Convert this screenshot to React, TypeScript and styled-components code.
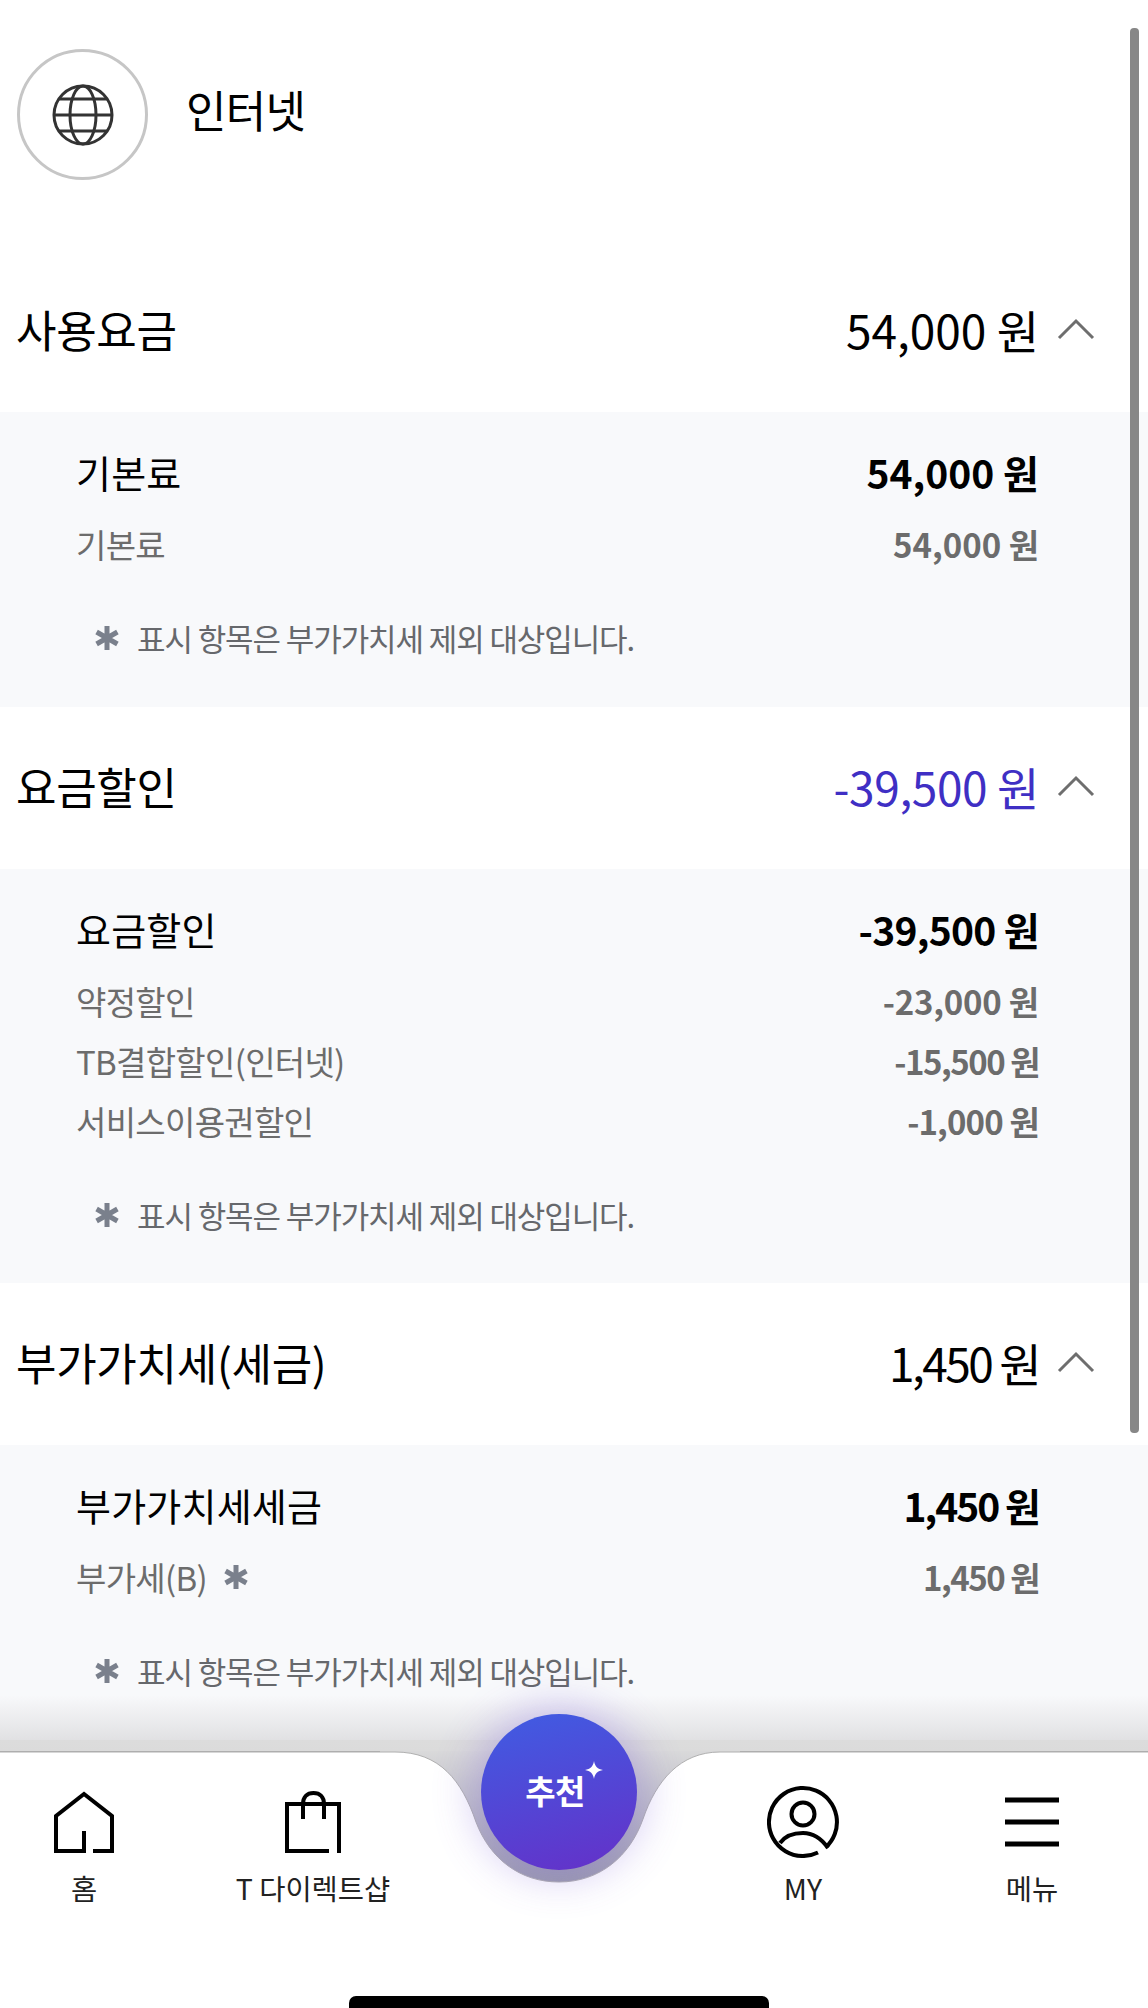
import React from "react";
import styled, { createGlobalStyle } from "styled-components";

const GlobalStyle = createGlobalStyle`
  html, body {
    margin: 0;
    padding: 0;
    background: #fff;
  }
  body {
    font-family: "Noto Sans CJK KR", "Noto Sans", sans-serif;
    color: #000;
  }
`;

const Screen = styled.div`
  position: relative;
  width: 1148px;
  height: 2008px;
  overflow: hidden;
  background: #fff;
`;

const Hero = styled.header`
  display: flex;
  align-items: center;
  gap: 38px;
  height: 250px;
  box-sizing: border-box;
  padding: 49px 0 70px 17px;
`;

const HeroIcon = styled.div`
  display: flex;
  align-items: center;
  justify-content: center;
  width: 131px;
  height: 131px;
  box-sizing: border-box;
  border: 3px solid #c6c6c6;
  border-radius: 50%;
`;

const HeroTitle = styled.h1`
  margin: 0 0 12px;
  font-size: 44px;
  font-weight: 400;
  letter-spacing: -0.7px;
`;

const SectionHead = styled.div`
  display: flex;
  align-items: center;
  justify-content: space-between;
  height: 162px;
  box-sizing: border-box;
  padding: 0 53px 5px 16px;
`;

const SectionTitle = styled.h2`
  margin: 0;
  font-size: 44px;
  font-weight: 400;
  letter-spacing: -0.3px;
`;

const SectionTotal = styled.div<{ $accent?: boolean; $tracking: number }>`
  display: flex;
  align-items: center;
  gap: 18px;
  font-size: 46px;
  letter-spacing: ${({ $tracking }) => $tracking}px;
  color: ${({ $accent }) => ($accent ? "#3f2fc4" : "#000")};
`;

const Panel = styled.div<{ $tail: number }>`
  background: #f8f9fb;
  padding: 32px 109px ${({ $tail }) => $tail}px 76px;
`;

const Row = styled.div`
  display: flex;
  align-items: center;
  justify-content: space-between;
  box-sizing: border-box;
  height: 60px;
  padding-bottom: 5px;
`;

const MainRow = styled(Row)`
  margin-bottom: 12px;
  font-size: 38px;
  letter-spacing: 0.2px;
`;

const MainAmount = styled.span<{ $tracking: number }>`
  font-size: 39px;
  font-weight: 700;
  letter-spacing: ${({ $tracking }) => $tracking}px;
`;

const SubRow = styled(Row)`
  font-size: 33px;
  letter-spacing: -0.7px;
  color: #6c6c6c;
`;

const SubLabel = styled.span`
  display: flex;
  align-items: center;
  gap: 16px;
`;

const SubAmount = styled.span<{ $tracking: number }>`
  font-weight: 700;
  letter-spacing: ${({ $tracking }) => $tracking}px;
`;

const Note = styled.div`
  display: flex;
  align-items: center;
  gap: 17px;
  height: 60px;
  box-sizing: border-box;
  margin-top: 34px;
  padding: 0 0 5px 18px;
  font-size: 31px;
  letter-spacing: -1.1px;
  color: #66686c;
`;

const FadeShade = styled.div`
  position: absolute;
  left: 0;
  right: 0;
  top: 1695px;
  height: 57px;
  background: linear-gradient(
    to bottom,
    rgba(225, 225, 227, 0) 0,
    rgba(225, 225, 227, 1) 45px,
    #dcdcdc 45px,
    #dbdbdb 56px,
    #ababab 56px
  );
`;

const ScrollThumb = styled.div`
  position: absolute;
  left: 1130px;
  top: 28px;
  width: 9px;
  height: 1405px;
  border-radius: 4px;
  background: #878787;
`;

const NavBar = styled.nav`
  position: absolute;
  left: 0;
  right: 0;
  top: 1752px;
  height: 256px;
`;

const NavShape = styled.svg`
  position: absolute;
  left: 0;
  top: -1px;
  display: block;
`;

const NavItems = styled.div`
  position: relative;
  display: grid;
  grid-template-columns: 168px 290px 202px 286px 172px;
  height: 100%;
`;

const NavItem = styled.a`
  display: flex;
  flex-direction: column;
  align-items: center;
  padding-top: 39px;
  color: #222;
  font-size: 28.5px;
  line-height: 40px;
`;

const NavIconSlot = styled.div`
  display: flex;
  align-items: center;
  justify-content: center;
  height: 62px;
  margin-bottom: 15px;
`;

const Recommend = styled.button`
  position: absolute;
  left: 481px;
  top: -38px;
  display: flex;
  align-items: center;
  justify-content: center;
  width: 156px;
  height: 156px;
  padding: 0 8px 4px 0;
  border: 0;
  border-radius: 50%;
  background: linear-gradient(165deg, #3f5de3 0%, #6530c8 100%);
  box-shadow: 0 0 40px 8px rgba(112, 80, 215, 0.3);
  color: #fff;
  font-family: inherit;
  font-size: 33px;
  font-weight: 700;
  letter-spacing: -0.5px;
`;

const Sparkle = styled.svg`
  position: absolute;
  left: 104px;
  top: 47px;
`;

const HomeBar = styled.div`
  position: absolute;
  left: 349px;
  top: 1996px;
  width: 420px;
  height: 14px;
  border-radius: 7px 7px 0 0;
  background: #000;
`;

type Line = { label: string; amount: string; tracking: number; asterisk?: boolean };
type Section = {
  title: string;
  total: string;
  totalTracking: number;
  accent?: boolean;
  mainLabel: string;
  mainAmount: string;
  mainTracking: number;
  tail: number;
  lines: Line[];
};

const sections: Section[] = [
  {
    title: "사용요금",
    total: "54,000 원",
    totalTracking: 0,
    mainLabel: "기본료",
    mainAmount: "54,000 원",
    mainTracking: 0,
    tail: 37,
    lines: [{ label: "기본료", amount: "54,000 원", tracking: 0 }],
  },
  {
    title: "요금할인",
    total: "-39,500 원",
    totalTracking: -0.4,
    accent: true,
    mainLabel: "요금할인",
    mainAmount: "-39,500 원",
    mainTracking: -0.7,
    tail: 36,
    lines: [
      { label: "약정할인", amount: "-23,000 원", tracking: -0.2 },
      { label: "TB결합할인(인터넷)", amount: "-15,500 원", tracking: -1.5 },
      { label: "서비스이용권할인", amount: "-1,000 원", tracking: -0.85 },
    ],
  },
  {
    title: "부가가치세(세금)",
    total: "1,450 원",
    totalTracking: -2.5,
    mainLabel: "부가가치세세금",
    mainAmount: "1,450 원",
    mainTracking: -2,
    tail: 37,
    lines: [{ label: "부가세(B)", amount: "1,450 원", tracking: -1.5, asterisk: true }],
  },
];

const Asterisk = () => (
  <svg width="26" height="26" viewBox="0 0 26 26" fill="none" stroke="#7a808c" strokeWidth="5">
    <path d="M13 1v24M2.6 7l20.8 12M23.4 7L2.6 19" />
  </svg>
);

const Chevron = () => (
  <svg width="38" height="22" viewBox="0 0 38 22" fill="none" stroke="#6e6e6e" strokeWidth="3">
    <path d="M2 20L19 3l17 17" />
  </svg>
);

const Globe = () => (
  <svg width="62" height="62" viewBox="0 0 62 62" fill="none" stroke="#333" strokeWidth="3">
    <circle cx="31" cy="31" r="29" />
    <ellipse cx="31" cy="31" rx="13" ry="29" />
    <path d="M2 31h58M7 15h48M7 47h48" />
  </svg>
);

const notchEdge =
  "M0 1H395C440 1 462 30 476 71C490 108 520 131 559 131C600 131 630 105 643 68C656 30 680 1 720 1H1148";

export default function App() {
  return (
    <Screen>
      <GlobalStyle />
      <Hero>
        <HeroIcon>
          <Globe />
        </HeroIcon>
        <HeroTitle>인터넷</HeroTitle>
      </Hero>

      {sections.map((s) => (
        <section key={s.title}>
          <SectionHead>
            <SectionTitle>{s.title}</SectionTitle>
            <SectionTotal $accent={s.accent} $tracking={s.totalTracking}>
              {s.total}
              <Chevron />
            </SectionTotal>
          </SectionHead>
          <Panel $tail={s.tail}>
            <MainRow>
              <span>{s.mainLabel}</span>
              <MainAmount $tracking={s.mainTracking}>{s.mainAmount}</MainAmount>
            </MainRow>
            {s.lines.map((l) => (
              <SubRow key={l.label}>
                <SubLabel>
                  {l.label}
                  {l.asterisk && <Asterisk />}
                </SubLabel>
                <SubAmount $tracking={l.tracking}>{l.amount}</SubAmount>
              </SubRow>
            ))}
            <Note>
              <Asterisk />
              표시 항목은 부가가치세 제외 대상입니다.
            </Note>
          </Panel>
        </section>
      ))}

      <FadeShade />
      <ScrollThumb />

      <NavBar>
        <NavShape width="1148" height="257" viewBox="0 0 1148 257">
          <defs>
            <linearGradient id="notch" x1="0" y1="0" x2="0" y2="1">
              <stop offset="0" stopColor="#d9d9da" />
              <stop offset="1" stopColor="#9d9db0" />
            </linearGradient>
          </defs>
          <rect x="380" y="0" width="360" height="132" fill="url(#notch)" />
          <path d={`${notchEdge}V257H0Z`} fill="#fff" />
          <path d={notchEdge} fill="none" stroke="#b0b0b0" strokeWidth="1" />
        </NavShape>
        <NavItems>
          <NavItem>
            <NavIconSlot>
              <svg width="60" height="62" viewBox="0 0 60 62" fill="none" stroke="#000" strokeWidth="4">
                <path d="M32 60H2V25L30 3l28 22v35H39M30 40v22" />
              </svg>
            </NavIconSlot>
            홈
          </NavItem>
          <NavItem>
            <NavIconSlot>
              <svg width="56" height="62" viewBox="0 0 56 62" fill="none" stroke="#000" strokeWidth="4">
                <path d="M54 62V13H2v47h42M18 28V13C18 6 22 2 28.5 2S39 6 39 13V28" />
              </svg>
            </NavIconSlot>
            T 다이렉트샵
          </NavItem>
          <span />
          <NavItem>
            <NavIconSlot>
              <svg width="72" height="72" viewBox="0 0 72 72" fill="none" stroke="#000" strokeWidth="4">
                <path d="M51 66.5A34 34 0 1 1 59 61" />
                <circle cx="36" cy="28" r="11.5" />
                <path d="M13 57C18 50 26 47 36 47S54 52 61 62" />
              </svg>
            </NavIconSlot>
            MY
          </NavItem>
          <NavItem>
            <NavIconSlot>
              <svg width="54" height="50" viewBox="0 0 54 50" fill="none" stroke="#000" strokeWidth="5">
                <path d="M0 3h54M0 25h54M0 47h54" />
              </svg>
            </NavIconSlot>
            메뉴
          </NavItem>
        </NavItems>
        <Recommend>
          추천
          <Sparkle width="18" height="18" viewBox="0 0 20 20" fill="#fff">
            <path d="M10 0C11 6 14 9 20 10 14 11 11 14 10 20 9 14 6 11 0 10 6 9 9 6 10 0Z" />
          </Sparkle>
        </Recommend>
      </NavBar>

      <HomeBar />
    </Screen>
  );
}
